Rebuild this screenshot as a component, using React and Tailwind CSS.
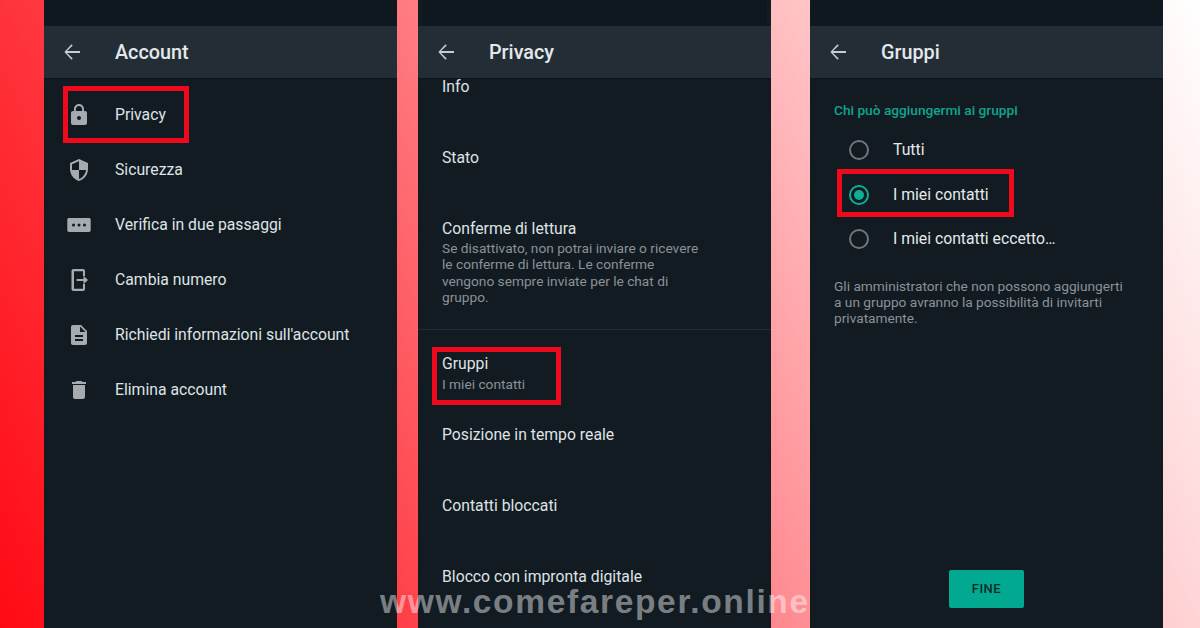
const Ic = ({ d, children, cls = "w-6 h-6" }) => (
  <svg viewBox="0 0 24 24" className={cls + " shrink-0 text-[#a6abaf]"} fill="currentColor">
    {d ? <path d={d} /> : children}
  </svg>
);

const Back = () => (
  <svg viewBox="0 0 24 24" className="w-6 h-6 shrink-0 text-[#c6ced3]" fill="currentColor">
    <path d="M20 11.100H7l5.700-5.700-1.200-1.200L4.400 12l7.100 7.700 1.200-1.200L7 12.900h13z" />
  </svg>
);

const icons = {
  lock: <Ic d="M18 8h-1V6c0-2.760-2.240-5-5-5S7 3.240 7 6v2H6c-1.100 0-2 .9-2 2v10c0 1.100.9 2 2 2h12c1.100 0 2-.9 2-2V10c0-1.100-.9-2-2-2zm-6 9c-1.100 0-2-.9-2-2s.9-2 2-2 2 .9 2 2-.9 2-2 2zm3.100-9H8.900V6c0-1.710 1.390-3.100 3.100-3.100 1.710 0 3.100 1.390 3.100 3.100v2z" />,
  shield: <Ic d="M12 1L3 5v6c0 5.550 3.840 10.740 9 12 5.160-1.260 9-6.450 9-12V5l-9-4zm0 10.990h7c-.53 4.120-3.280 7.790-7 8.940V12H5V6.300l7-3.110v8.800z" />,
  dots: (
    <Ic>
      <path
        fillRule="evenodd"
        d="M2 5h20c1 0 1.700.7 1.700 1.700v10.600c0 1-.7 1.700-1.700 1.700H2c-1 0-1.700-.7-1.700-1.700V6.700C.3 5.700 1 5 2 5zm4.500 5.500a1.500 1.500 0 1 0 0 3 1.500 1.500 0 0 0 0-3zm5.500 0a1.500 1.500 0 1 0 0 3 1.500 1.500 0 0 0 0-3zm5.500 0a1.500 1.500 0 1 0 0 3 1.500 1.500 0 0 0 0-3z"
      />
    </Ic>
  ),
  change: (
    <Ic>
      <path d="M6.500 1h9.500c1 0 2 .9 2 2v5h-2V3.200H7V20.800h9V16h2v5c0 1.100-1 2-2 2H6.500c-1.100 0-2-.9-2-2V3c0-1.100.9-2 2-2z" />
      <path d="M9.500 11h7V7.800l4.500 4.200-4.500 4.200V13h-7z" />
    </Ic>
  ),
  doc: <Ic d="M14 2H6c-1.100 0-1.990.9-1.990 2L4 20c0 1.100.89 2 1.990 2H18c1.100 0 2-.9 2-2V8l-6-6zm2 16H8v-2h8v2zm0-4H8v-2h8v2zm-3-5V3.500L18.500 9H13z" />,
  trash: <Ic d="M6 19c0 1.100.9 2 2 2h8c1.100 0 2-.9 2-2V7H6v12zM19 4h-3.500l-1-1h-5l-1 1H5v2h14V4z" />,
};

const accountRows = [
  ["lock", "Privacy"],
  ["shield", "Sicurezza"],
  ["dots", "Verifica in due passaggi"],
  ["change", "Cambia numero"],
  ["doc", "Richiedi informazioni sull'account"],
  ["trash", "Elimina account"],
];

const Panel = ({ title, children, inset }) => (
  <section className="w-[353px] h-full shrink-0 flex flex-col bg-[#121b22] overflow-hidden">
    <div className={"h-[26px] shrink-0 bg-[#0f181e]" + (inset ? " mx-[4px]" : "")} />
    <header className="h-[52px] shrink-0 bg-[#232d36] flex items-center pl-4 gap-[31px] shadow-[0_1px_1px_rgba(0,0,0,0.25)] z-10">
      <Back />
      <h1 className="mt-[2px] text-[19.800px] leading-none font-medium text-[#e4e8ea]">{title}</h1>
    </header>
    {children}
  </section>
);

const Radio = ({ on, label }) => (
  <div className="flex items-center gap-[24px] h-[44.500px] pl-[15px]">
    <span
      className={
        "w-[20px] h-[20px] rounded-full border-2 flex items-center justify-center " +
        (on ? "border-[#10ad95]" : "border-[#70767a]")
      }
    >
      {on && <span className="w-[10px] h-[10px] rounded-full bg-[#10ad95]" />}
    </span>
    <span className="text-[15.750px] text-[#e6e9eb]">{label}</span>
  </div>
);

export default function App() {
  return (
    <div
      className="relative w-[1200px] h-[628px] overflow-hidden flex bg-[linear-gradient(64deg,#ff0a14_0%,#ff4048_27%,#ff8a90_52%,#ffd0d2_78%,#ffffff_100%)]"
      style={{ fontFamily: "Roboto, sans-serif" }}
    >
      <div className="w-[44px] shrink-0" />

      <Panel title="Account">
        <div className="pt-[9px] pl-[23px] flex flex-col">
          {accountRows.map(([ic, t]) => (
            <div key={t} className="h-[55px] flex items-center gap-[24px]">
              {icons[ic]}
              <span className="text-[15.750px] text-[#dfe3e6]">{t}</span>
            </div>
          ))}
        </div>
      </Panel>

      <div className="w-[21px] shrink-0" />

      <Panel title="Privacy" inset>
        <div className="px-[24px] text-[15.750px] text-[#dfe3e6] leading-[19px]">
          <div className="h-[71px] flex items-start"><span className="-mt-[1px]">Info</span></div>
          <div className="h-[71px] flex items-start"><span className="-mt-[1px]">Stato</span></div>
          <div className="-mt-[1px]">Conferme di lettura</div>
          <p className="mt-[2px] text-[13.700px] leading-[16.400px] text-[#8c9296]">
            Se disattivato, non potrai inviare o ricevere
            <br />
            le conferme di lettura. Le conferme
            <br />
            vengono sempre inviate per le chat di
            <br />
            gruppo.
          </p>
        </div>
        <div className="h-px mt-[23px] bg-[#222c33]" />
        <div className="px-[24px] text-[15.750px] text-[#dfe3e6] leading-[19px]">
          <div className="mt-[24px]">Gruppi</div>
          <div className="mt-[2px] text-[13.700px] text-[#8c9296]">I miei contatti</div>
          <div className="mt-[31px]">Posizione in tempo reale</div>
          <div className="mt-[52px]">Contatti bloccati</div>
          <div className="mt-[52px]">Blocco con impronta digitale</div>
        </div>
      </Panel>

      <div className="w-[39px] shrink-0" />

      <Panel title="Gruppi">
        <div className="flex-1 flex flex-col px-[24px]">
          <h2 className="mt-[24px] text-[13.700px] leading-[16px] font-medium text-[#10a58e]">Chi può aggiungermi ai gruppi</h2>
          <div className="mt-[10px] flex flex-col">
            <Radio label="Tutti" />
            <Radio on label="I miei contatti" />
            <Radio label="I miei contatti eccetto…" />
          </div>
          <p className="mt-[16px] text-[13.700px] leading-[16.400px] text-[#8c9296]">
            Gli amministratori che non possono aggiungerti
            <br />
            a un gruppo avranno la possibilità di invitarti
            <br />
            privatamente.
          </p>
          <button className="mt-auto mb-[20px] self-center w-[75px] h-[38px] rounded-[2px] bg-[#00a98f] text-[13px] font-medium tracking-[0.5px] text-[#0f2a2a]">
            FINE
          </button>
        </div>
      </Panel>

      <div className="absolute left-[63px] top-[86px] w-[126px] h-[57px] border-[5px] border-[#f0091c]" />
      <div className="absolute left-[432px] top-[347px] w-[129px] h-[58px] border-[5px] border-[#f0091c]" />
      <div className="absolute left-[837px] top-[169px] w-[177px] h-[48px] border-[5px] border-[#f0091c]" />

      <div
        className="absolute left-[380px] top-[588px] text-[33.500px] leading-[28px] font-bold tracking-[1.650px] text-white/45 whitespace-nowrap"
        style={{ fontFamily: '"Liberation Sans", sans-serif' }}
      >
        www.comefareper.online
      </div>
    </div>
  );
}
